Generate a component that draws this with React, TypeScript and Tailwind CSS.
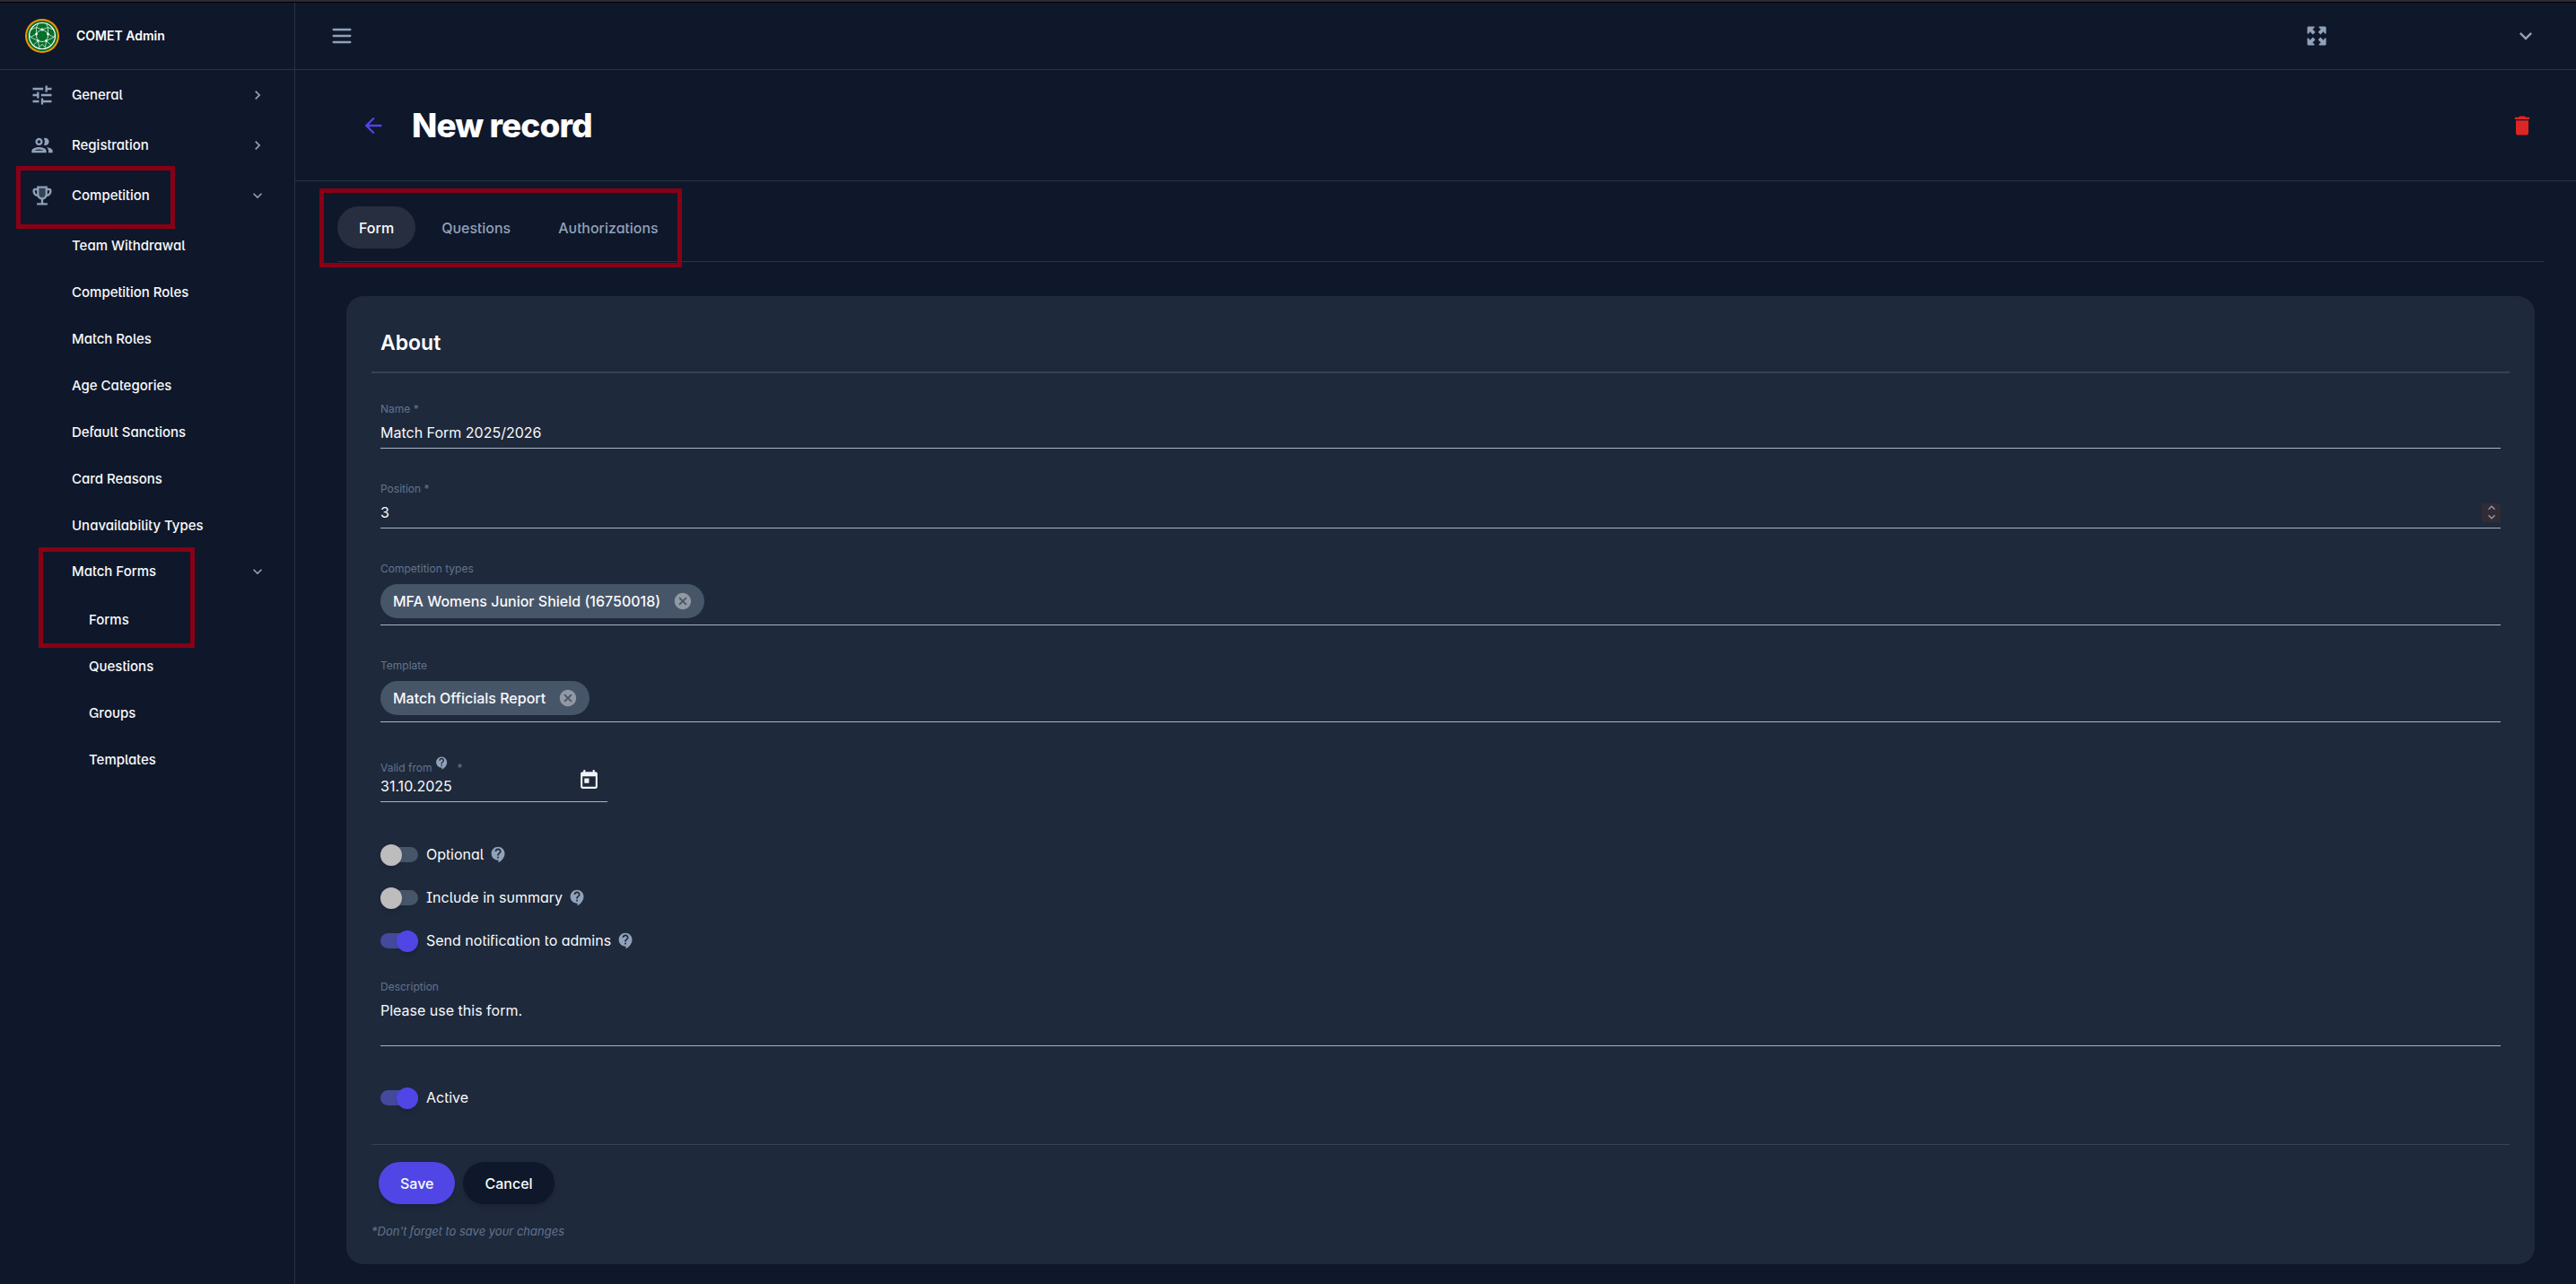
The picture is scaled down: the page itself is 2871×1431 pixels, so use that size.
import { clsx } from "clsx";
import { type ReactNode, useState } from "react";
import { HiOutlineMenu } from "react-icons/hi";
import {
  MdArrowBack,
  MdCancel,
  MdChevronRight,
  MdContactSupport,
  MdDelete,
  MdExpandLess,
  MdExpandMore,
  MdOutlineGroup,
  MdToday,
  MdTune,
} from "react-icons/md";

const competitionItems = [
  "Team Withdrawal",
  "Competition Roles",
  "Match Roles",
  "Age Categories",
  "Default Sanctions",
  "Card Reasons",
  "Unavailability Types",
];

const tabs = ["Form", "Questions", "Authorizations"];

/** Club crest: green ball with a white net inside an orange ring */
function Logo() {
  return (
    <svg aria-hidden="true" className="size-[38px]" fill="none" viewBox="0 0 38 38">
      <circle cx="19" cy="19" fill="#f59300" r="19" />
      <circle cx="19" cy="19" fill="#04702a" r="17" />
      <g stroke="#fff">
        <circle cx="19" cy="19" r="14.5" strokeWidth="1.2" />
        <circle cx="19" cy="19" r="6.5" strokeWidth="0.8" />
        <path
          d="M19 12 12.500 9.500 12.500 17 6 20.500l8.500 4 1 7L19 28.500l3.500 3 1-7 8.500-4L25.500 17l0-7.500zM12.500 9.500l2-4M25.500 9.500l-2-4M12.500 9.500 6.500 12M25.500 9.500l6 2.500M6 20.500l-1.500-3M32 20.500l1.500-3M14.500 24.500l-5 4.500M23.500 24.500l5 4.500"
          strokeWidth="0.7"
        />
      </g>
      <g fill="#fff">
        <circle cx="19" cy="12" r="1.400" />
        <circle cx="12.500" cy="17" r="1.300" />
        <circle cx="25.500" cy="17" r="1.300" />
        <circle cx="14.500" cy="24.500" r="1.300" />
        <circle cx="23.500" cy="24.500" r="1.300" />
      </g>
    </svg>
  );
}

function TrophyIcon() {
  return (
    <svg aria-hidden="true" className="size-7" fill="currentColor" viewBox="0 0 24 24">
      <path d="M12 14c-1.650 0-3-1.350-3-3V5h6v6c0 1.650-1.350 3-3 3z" opacity=".3" />
      <path d="M19 5h-2V3H7v2H5c-1.100 0-2 .9-2 2v1c0 2.550 1.920 4.630 4.390 4.940.63 1.500 1.980 2.630 3.610 2.960V19H7v2h10v-2h-4v-3.100c1.630-.33 2.980-1.460 3.610-2.960C19.080 12.630 21 10.550 21 8V7c0-1.100-.9-2-2-2zM5 8V7h2v3.820C5.840 10.400 5 9.300 5 8zm7 6c-1.650 0-3-1.350-3-3V5h6v6c0 1.650-1.350 3-3 3zm7-6c0 1.300-.84 2.400-2 2.820V7h2v1z" />
    </svg>
  );
}

/** Four solid arrows that point to the corners */
function FullscreenIcon() {
  const arrow = "M3.800 3H9.800V4.300L8 5.600 10.700 8.300 8.300 10.700 5.600 8 4.300 9.800H3V3.800Z";

  return (
    <svg aria-hidden="true" className="size-7" fill="currentColor" viewBox="0 0 24 24">
      <path d={arrow} />
      <path d={arrow} transform="rotate(90 12 12)" />
      <path d={arrow} transform="rotate(180 12 12)" />
      <path d={arrow} transform="rotate(270 12 12)" />
    </svg>
  );
}

/** Dark red outline laid over a part of the page that needs attention */
function Highlight({ className }: { className: string }) {
  return (
    <span
      className={clsx("pointer-events-none absolute border-[5px] border-[#880015]", className)}
    />
  );
}

function NavGroup({ icon, label, open }: { icon: ReactNode; label: string; open?: boolean }) {
  return (
    <button
      aria-expanded={Boolean(open)}
      className="flex h-14 w-full items-center pr-[31px] pl-[33px] text-left"
      type="button"
    >
      <span className="w-[47px] text-slate-400">{icon}</span>
      <span className="flex-1">{label}</span>
      {open ? (
        <MdExpandMore className="size-5 text-slate-400" />
      ) : (
        <MdChevronRight className="size-5 text-slate-400" />
      )}
    </button>
  );
}

function NavLink({ label, nested }: { label: string; nested?: boolean }) {
  return (
    <a
      className={clsx("flex h-[52px] items-center", nested ? "pl-[99px]" : "pl-20")}
      href={`#${label.toLowerCase().replace(/ /g, "-")}`}
    >
      {label}
    </a>
  );
}

function Sidebar() {
  return (
    <aside className="w-[329px] shrink-0 border-r border-[#2b3243]">
      <div className="flex h-[75px] items-center gap-[19px] border-b border-[#2b3243] pl-7">
        <Logo />
        <span className="font-semibold text-sm text-white">COMET Admin</span>
      </div>
      <nav className="font-medium text-[15px] text-slate-50 [font-feature-settings:'cv11','salt']">
        <NavGroup icon={<MdTune className="size-7" />} label="General" />
        <NavGroup icon={<MdOutlineGroup className="size-7" />} label="Registration" />
        <div className="relative mb-0.5">
          <NavGroup icon={<TrophyIcon />} label="Competition" open />
          <Highlight className="-top-[5px] left-[18px] h-[70px] w-[177px]" />
        </div>
        {competitionItems.map((item) => (
          <NavLink key={item} label={item} />
        ))}
        <div className="relative">
          <button
            aria-expanded="true"
            className="mb-[3px] flex h-[50px] w-full items-center justify-between pr-[31px] pl-20 text-left"
            type="button"
          >
            Match Forms
            <MdExpandMore className="size-5 text-slate-400" />
          </button>
          <NavLink label="Forms" nested />
          <Highlight className="-top-[2px] left-[43px] h-28 w-[174px]" />
        </div>
        <NavLink label="Questions" nested />
        <NavLink label="Groups" nested />
        <NavLink label="Templates" nested />
      </nav>
    </aside>
  );
}

function FieldLabel({ htmlFor, children }: { htmlFor: string; children: ReactNode }) {
  return (
    <label className="block text-slate-500 text-xs leading-4" htmlFor={htmlFor}>
      {children}
    </label>
  );
}

function ChipField({ id, label, value }: { id: string; label: string; value: string }) {
  return (
    <div className="border-[#aab4c0] border-b pb-[7px]">
      <FieldLabel htmlFor={id}>{label}</FieldLabel>
      <div className="mt-[9px] flex">
        <span className="flex h-[38px] items-center gap-[14px] rounded-full bg-[#475569] pr-[13px] pl-[14px] font-medium text-base text-slate-50">
          {value}
          <button aria-label={`Remove ${value}`} type="button">
            <MdCancel className="size-[22px] text-[#9199a4]" />
          </button>
        </span>
        <input className="min-w-0 flex-1 bg-transparent pl-2 outline-none" id={id} type="text" />
      </div>
    </div>
  );
}

function Toggle({
  id,
  label,
  checked,
  help,
}: {
  id: string;
  label: string;
  checked?: boolean;
  help?: boolean;
}) {
  return (
    <div className="flex h-12 items-center [font-feature-settings:'cv11','salt']">
      <input
        className="relative h-[17px] w-[42px] appearance-none rounded-full bg-[#475569] before:absolute before:-top-[3px] before:left-0 before:size-6 before:rounded-full before:bg-[#bdbdbd] before:shadow-md checked:bg-[#45499d] checked:before:left-[18px] checked:before:bg-[#4f46e5]"
        defaultChecked={checked}
        id={id}
        role="switch"
        type="checkbox"
      />
      <label className="ml-[9px]" htmlFor={id}>
        {label}
      </label>
      {help && <MdContactSupport className="ml-[6px] size-[21px] text-slate-400" />}
    </div>
  );
}

function RecordForm() {
  const [position, setPosition] = useState(3);

  return (
    <form
      className="mx-[10px] mt-[38px] rounded-[19px] bg-[#1e293b] px-7 pb-[27px] text-base text-slate-50"
      onSubmit={(e) => e.preventDefault()}
    >
      <h2 className="border-[#374354] border-b-2 px-[10px] pt-9 pb-4 font-semibold text-[23px] text-white leading-8">
        About
      </h2>

      <div className="flex flex-col gap-[37px] px-[10px] pt-8">
        <div className="border-[#aab4c0] border-b pb-[5px]">
          <FieldLabel htmlFor="name">Name *</FieldLabel>
          <input
            className="mt-[6px] block h-6 w-full bg-transparent outline-none"
            defaultValue="Match Form 2025/2026"
            id="name"
            type="text"
          />
        </div>

        <div className="border-[#aab4c0] border-b pb-[5px]">
          <FieldLabel htmlFor="position">Position *</FieldLabel>
          <div className="mt-[6px] flex h-6 items-center">
            <input
              className="h-6 min-w-0 flex-1 appearance-none bg-transparent outline-none [&::-webkit-inner-spin-button]:appearance-none"
              id="position"
              onChange={(e) => setPosition(Number(e.target.value))}
              type="number"
              value={position}
            />
            <div className="flex size-[21px] flex-col items-center justify-center bg-[#302c35] text-[#9a98a5]">
              <button
                aria-label="Increase position"
                onClick={() => setPosition(position + 1)}
                type="button"
              >
                <MdExpandLess className="-my-[3px] size-4" />
              </button>
              <button
                aria-label="Decrease position"
                onClick={() => setPosition(position - 1)}
                type="button"
              >
                <MdExpandMore className="-my-[3px] size-4" />
              </button>
            </div>
          </div>
        </div>

        <ChipField
          id="competition-types"
          label="Competition types"
          value="MFA Womens Junior Shield (16750018)"
        />
        <ChipField id="template" label="Template" value="Match Officials Report" />

        <div className="relative w-[253px] border-[#aab4c0] border-b pb-[5px]">
          <label
            className="flex h-[22px] items-end text-slate-500 text-xs leading-4"
            htmlFor="valid-from"
          >
            Valid from
            <MdContactSupport className="mr-2 ml-[3px] size-[17px] self-start text-slate-400" />
            *
          </label>
          <input
            className="block h-6 w-48 bg-transparent outline-none"
            defaultValue="31.10.2025"
            id="valid-from"
            type="text"
          />
          <button
            aria-label="Open calendar"
            className="absolute right-2 bottom-[11px] text-slate-100"
            type="button"
          >
            <MdToday className="size-[25px]" />
          </button>
        </div>
      </div>

      <div className="px-[10px] pt-[34px]">
        <Toggle help id="optional" label="Optional" />
        <Toggle help id="include-in-summary" label="Include in summary" />
        <Toggle checked help id="send-notification" label="Send notification to admins" />
      </div>

      <div className="mx-[10px] mt-5 border-[#aab4c0] border-b">
        <FieldLabel htmlFor="description">Description</FieldLabel>
        <textarea
          className="mt-[6px] block h-[51px] w-full resize-none bg-transparent leading-6 outline-none"
          defaultValue="Please use this form."
          id="description"
        />
      </div>

      <div className="px-[10px] pt-[33px] pb-7">
        <Toggle checked id="active" label="Active" />
      </div>

      <div className="flex gap-[9px] border-[#374354] border-t px-2 pt-[19px] font-medium">
        <button
          className="h-[47px] rounded-full bg-[#4f46e5] px-6 text-slate-50 shadow-md"
          type="submit"
        >
          Save
        </button>
        <button className="h-[47px] rounded-full bg-[#0f172a] px-6 shadow-md" type="button">
          Cancel
        </button>
      </div>
      <p className="mt-5 text-[13px] text-slate-500 italic leading-5 [font-feature-settings:'cv11','salt']">
        *Don't forget to save your changes
      </p>
    </form>
  );
}

export default function App() {
  const [activeTab, setActiveTab] = useState("Form");

  return (
    <div className="flex min-h-screen flex-col bg-[#0f172a] font-['Inter',sans-serif] text-slate-50">
      <div className="h-[3px] border-black border-b bg-[#2b2a30]" />
      <div className="flex flex-1">
        <Sidebar />

        <main className="min-w-0 flex-1">
          {/* Top bar */}
          <header className="flex h-[75px] items-center border-[#2b3243] border-b pr-[42px] pl-[38px] text-slate-400">
            <button aria-label="Toggle navigation" className="mr-auto" type="button">
              <HiOutlineMenu className="size-7" />
            </button>
            <button aria-label="Fullscreen" className="mr-[205px]" type="button">
              <FullscreenIcon />
            </button>
            <button aria-label="User menu" type="button">
              <MdExpandMore className="size-7" />
            </button>
          </header>

          {/* Page title */}
          <div className="flex h-[124px] items-center border-[#2b3243] border-b pr-[46px] pl-[73px]">
            <a aria-label="Back" className="text-[#4f46e5]" href="#back">
              <MdArrowBack className="size-7" />
            </a>
            <h1 className="ml-[29px] flex-1 font-extrabold text-[37px] text-white leading-10 tracking-tight">
              New record
            </h1>
            <button aria-label="Delete" className="text-[#dc2626]" type="button">
              <MdDelete className="size-7" />
            </button>
          </div>

          <div className="pr-[36px] pb-[22px] pl-[47px]">
            <div className="relative">
              <div className="flex gap-[5px] border-[#2b3243] border-b pt-7 pb-[14px]" role="tablist">
                {tabs.map((tab) => (
                  <button
                    aria-selected={tab === activeTab}
                    className={clsx(
                      "h-[47px] rounded-full px-6 font-medium text-base [font-feature-settings:'cv11','salt']",
                      tab === activeTab ? "bg-[#272e3f] text-white" : "text-slate-400",
                    )}
                    key={tab}
                    onClick={() => setActiveTab(tab)}
                    role="tab"
                    type="button"
                  >
                    {tab}
                  </button>
                ))}
              </div>
              <Highlight className="top-2 -left-5 h-[88px] w-[404px]" />
            </div>
            <RecordForm />
          </div>
        </main>
      </div>
    </div>
  );
}
